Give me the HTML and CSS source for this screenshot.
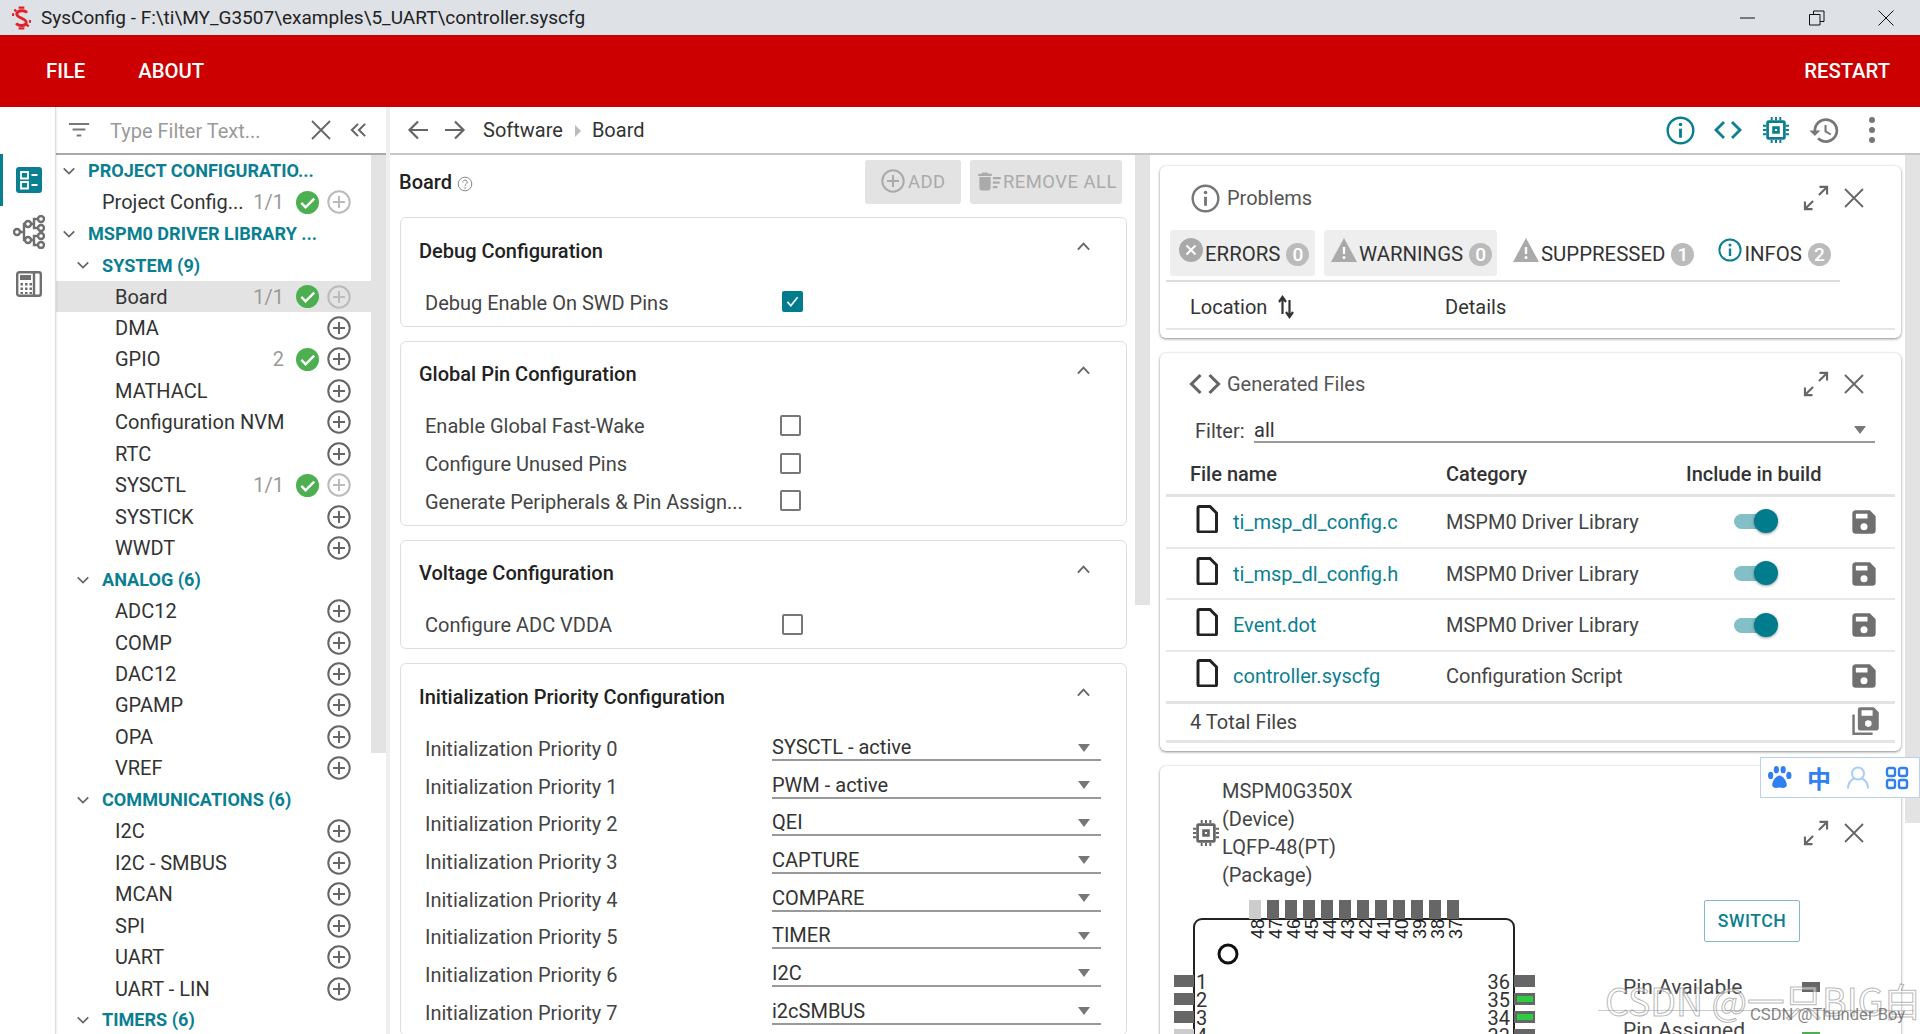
FILE: index.html
```html
<!DOCTYPE html>
<html lang="en">
<head>
<meta charset="utf-8">
<title>SysConfig</title>
<link rel="stylesheet" href="styles.css">
</head>
<body>
<svg class="sprite" width="0" height="0" aria-hidden="true">
  <symbol id="i-close" viewBox="0 0 24 24"><path d="M3 3l18 18M21 3L3 21" fill="none" stroke="currentColor" stroke-width="1.800"/></symbol>
  <symbol id="i-expand" viewBox="0 0 24 24"><path d="M14.500 9.500L21.500 2.500M15 2.500h6.500V9M9.500 14.500L2.500 21.500M2.500 15v6.500H9" fill="none" stroke="currentColor" stroke-width="1.800"/></symbol>
  <symbol id="i-plus" viewBox="0 0 24 24"><circle cx="12" cy="12" r="10.700" fill="none" stroke="currentColor" stroke-width="2"/><path d="M12 6v12M6 12h12" stroke="currentColor" stroke-width="2"/></symbol>
  <symbol id="i-check" viewBox="0 0 24 24"><circle cx="12" cy="12" r="12" fill="#4caf50"/><path d="M5.500 12.500l4.500 4.500 9-9" fill="none" stroke="#fff" stroke-width="2.600"/></symbol>
  <symbol id="i-down" viewBox="0 0 24 24"><path d="M3 7.500l9 9 9-9" fill="none" stroke="currentColor" stroke-width="3"/></symbol>
  <symbol id="i-up" viewBox="0 0 24 24"><path d="M3 17l9-9.500 9 9.500" fill="none" stroke="currentColor" stroke-width="3"/></symbol>
  <symbol id="i-info" viewBox="0 0 24 24"><circle cx="12" cy="12" r="10.600" fill="none" stroke="currentColor" stroke-width="2"/><path d="M12 10.500v7.500" stroke="currentColor" stroke-width="2.400"/><circle cx="12" cy="7" r="1.500" fill="currentColor"/></symbol>
  <symbol id="i-code" viewBox="0 0 24 24"><path d="M9 6l-6 6 6 6M15 6l6 6-6 6" fill="none" stroke="currentColor" stroke-width="2.100"/></symbol>
  <symbol id="i-chip" viewBox="0 0 24 24"><path d="M5 3h14a2 2 0 0 1 2 2v14a2 2 0 0 1-2 2H5a2 2 0 0 1-2-2V5a2 2 0 0 1 2-2zm.500 2.500v13h13v-13h-13z" fill="currentColor" fill-rule="evenodd"/><path d="M8.500 8.500h7v7h-7zM11 11v2h2v-2z" fill="currentColor" fill-rule="evenodd"/><path d="M8 0v3M12 0v3M16 0v3M8 21v3M12 21v3M16 21v3M0 8h3M0 12h3M0 16h3M21 8h3M21 12h3M21 16h3" stroke="currentColor" stroke-width="1.800"/></symbol>
  <symbol id="i-history" viewBox="0 0 24 24"><path d="M13 3a9 9 0 0 0-9 9H1l3.890 3.890.07.14L9 12H6c0-3.870 3.130-7 7-7s7 3.130 7 7-3.130 7-7 7c-1.930 0-3.680-.79-4.940-2.060l-1.420 1.420A8.954 8.954 0 0 0 13 21a9 9 0 0 0 0-18zm-1 5v5l4.280 2.540.72-1.210-3.500-2.080V8H12z" fill="currentColor"/></symbol>
  <symbol id="i-save" viewBox="0 0 24 24"><path d="M17 2H5a3 3 0 0 0-3 3v14a3 3 0 0 0 3 3h14a3 3 0 0 0 3-3V7l-5-5zm-5 17a3 3 0 1 1 0-6 3 3 0 0 1 0 6zm3-10H5V5h10v4z" fill="currentColor"/></symbol>
  <symbol id="i-saveall" viewBox="0 0 26 26"><path d="M10 1h11l4 4v13a2 2 0 0 1-2 2H10a2 2 0 0 1-2-2V3a2 2 0 0 1 2-2zm6.500 16a2.700 2.700 0 1 0 0-5.400 2.700 2.700 0 0 0 0 5.400zM11 3.500V8h9V3.500h-9z" fill="currentColor" fill-rule="evenodd"/><path d="M4.500 7v15.500H20" fill="none" stroke="currentColor" stroke-width="2"/></symbol>
  <symbol id="i-file" viewBox="0 0 22 28"><path d="M2 3a1.500 1.500 0 0 1 1.500-1.500H14L20.500 8v17.500A1.500 1.500 0 0 1 19 27H3.500A1.500 1.500 0 0 1 2 25.500z" fill="none" stroke="currentColor" stroke-width="3"/></symbol>
  <symbol id="i-sort" viewBox="0 0 16 24"><path d="M4.500 19V3M1 7l3.500-5L8 7M11.500 5v17M8 17l3.500 5 3.500-5" fill="none" stroke="currentColor" stroke-width="2.200"/></symbol>
  <symbol id="i-left" viewBox="0 0 24 24"><path d="M22 12H4M12 3.500L3.500 12l8.500 8.500" fill="none" stroke="currentColor" stroke-width="2.200"/></symbol>
  <symbol id="i-right" viewBox="0 0 24 24"><path d="M2 12h18M12 3.500l8.500 8.500-8.500 8.500" fill="none" stroke="currentColor" stroke-width="2.200"/></symbol>
  <symbol id="i-filter" viewBox="0 0 24 16"><path d="M1 1.500h22M5 7.500h14M9.500 14h5" stroke="currentColor" stroke-width="2.200"/></symbol>
  <symbol id="i-dbl" viewBox="0 0 18 16"><path d="M8.500 1.500L2 8l6.500 6.500M16 1.500L9.500 8l6.500 6.500" fill="none" stroke="currentColor" stroke-width="2.200"/></symbol>
  <symbol id="i-sweep" viewBox="0 0 24 24"><path d="M15 16h4v2h-4zm0-8h7v2h-7zm0 4h6v2h-6zM3 18c0 1.100.9 2 2 2h6c1.100 0 2-.9 2-2V8H3v10zM14 5h-3l-1-1H6L5 5H2v2h12z" fill="currentColor"/></symbol>
  <symbol id="i-help" viewBox="0 0 16 16"><circle cx="8" cy="8" r="6.800" fill="none" stroke="currentColor" stroke-width="1"/><path d="M5.800 6.300a2.200 2.200 0 1 1 3.400 1.800c-.8.500-1.200.9-1.200 1.900" fill="none" stroke="currentColor" stroke-width="1"/><circle cx="8" cy="12" r=".8" fill="currentColor"/></symbol>
  <symbol id="i-caret" viewBox="0 0 12 8"><path d="M0 0h12L6 8z" fill="currentColor"/></symbol>
</svg>

<header class="titlebar">
  <svg class="logo" viewBox="0 0 20 24"><g fill="none" stroke="#e2202a"><path d="M15.500 6.500C14 3.500 6 3.500 5 7.500c-.8 4.500 10.500 4.500 10 9.500-.5 3.800-8.500 3.800-10.500.5" stroke-width="3"/><path d="M7 1h6M7 23h6M1 7v3M19 14v3M2.500 3l2 2M15.500 19l2 2" stroke-width="2.400"/></g></svg>
  <span class="title-text">SysConfig - F:\ti\MY_G3507\examples\5_UART\controller.syscfg</span>
  <div class="winctl">
    <svg class="win-icon" viewBox="0 0 16 16"><path d="M0 8h15" stroke="#111" stroke-width="1"/></svg>
    <svg class="win-icon" viewBox="0 0 16 16"><path d="M.5 4.500h10.500v10.500H.5zM4.500 4.500v-3.500h10.500v10.500h-4" fill="none" stroke="#111" stroke-width="1"/></svg>
    <svg class="win-icon" viewBox="0 0 16 16"><path d="M.5.500l15 15M15.500.500l-15 15" stroke="#111" stroke-width="1"/></svg>
  </div>
</header>

<nav class="appbar">
  <a class="appbar-item">FILE</a>
  <a class="appbar-item">ABOUT</a>
  <a class="appbar-item appbar-end">RESTART</a>
</nav>

<main class="workspace">
  <aside class="rail">
    <div class="rail-btn rail-active">
      <svg class="rail-icon" viewBox="0 0 26 26"><rect width="26" height="26" rx="3" fill="#0b7f92"/><path d="M5 5h7v6.500H5zM5 15h7v6.500H5z" fill="none" stroke="#fff" stroke-width="1.800"/><path d="M15.500 8h6M15.500 18h6" stroke="#fff" stroke-width="2"/></svg>
    </div>
    <div class="rail-btn">
      <svg class="rail-icon rail-tree" viewBox="0 0 32 34" fill="none" stroke="#6f6f6f" stroke-width="2.400"><circle cx="4" cy="17" r="3"/><circle cx="15" cy="9" r="3"/><circle cx="15" cy="25" r="3"/><circle cx="28" cy="4" r="3"/><circle cx="28" cy="13" r="3"/><circle cx="28" cy="21" r="3"/><circle cx="28" cy="30" r="3"/><path d="M7 17h4V9h1M11 17v8h1M18 9h3V4h4M21 9v4h4M18 25h3v-4h4M21 25v5h4"/></svg>
    </div>
    <div class="rail-btn">
      <svg class="rail-icon" viewBox="0 0 26 26"><rect x="1.200" y="1.200" width="23.600" height="23.600" rx="2" fill="none" stroke="#6f6f6f" stroke-width="2.400"/><path d="M18 1v24" stroke="#6f6f6f" stroke-width="2.400"/><path d="M4 4h11v5H4z" fill="#6f6f6f"/><path d="M4.500 12h2.500v2.500H4.500zM9 12h2.500v2.500H9zM13.500 12H16v2.500h-2.500zM4.500 16.500h2.500V19H4.500zM9 16.500h2.500V19H9zM13.500 16.500H16V19h-2.500zM4.500 21h2.500v2H4.500zM9 21h2.500v2H9zM13.500 21H16v2h-2.500z" fill="#6f6f6f"/></svg>
    </div>
  </aside>

  <section class="tree-pane">
    <div class="filter-bar">
      <svg class="filter-icon"><use href="#i-filter"/></svg>
      <span class="filter-text">Type Filter Text...</span>
      <svg class="filter-x"><use href="#i-close"/></svg>
      <svg class="filter-dbl"><use href="#i-dbl"/></svg>
    </div>
    <div class="tree-body">
      <ul class="tree">
        <li class="row row-root"><svg class="chev"><use href="#i-down"/></svg><span class="group-name">PROJECT CONFIGURATIO...</span></li>
        <li class="row row-l1"><span class="name">Project Config...</span><span class="count">1/1</span><svg class="ok"><use href="#i-check"/></svg><svg class="plus plus-dim"><use href="#i-plus"/></svg></li>
        <li class="row row-root"><svg class="chev"><use href="#i-down"/></svg><span class="group-name">MSPM0 DRIVER LIBRARY ...</span></li>
        <li class="row row-group"><svg class="chev"><use href="#i-down"/></svg><span class="group-name">SYSTEM (9)</span></li>
        <li class="row row-item row-selected"><span class="name">Board</span><span class="count">1/1</span><svg class="ok"><use href="#i-check"/></svg><svg class="plus plus-dim"><use href="#i-plus"/></svg></li>
        <li class="row row-item"><span class="name">DMA</span><svg class="plus"><use href="#i-plus"/></svg></li>
        <li class="row row-item"><span class="name">GPIO</span><span class="count">2</span><svg class="ok"><use href="#i-check"/></svg><svg class="plus"><use href="#i-plus"/></svg></li>
        <li class="row row-item"><span class="name">MATHACL</span><svg class="plus"><use href="#i-plus"/></svg></li>
        <li class="row row-item"><span class="name">Configuration NVM</span><svg class="plus"><use href="#i-plus"/></svg></li>
        <li class="row row-item"><span class="name">RTC</span><svg class="plus"><use href="#i-plus"/></svg></li>
        <li class="row row-item"><span class="name">SYSCTL</span><span class="count">1/1</span><svg class="ok"><use href="#i-check"/></svg><svg class="plus plus-dim"><use href="#i-plus"/></svg></li>
        <li class="row row-item"><span class="name">SYSTICK</span><svg class="plus"><use href="#i-plus"/></svg></li>
        <li class="row row-item"><span class="name">WWDT</span><svg class="plus"><use href="#i-plus"/></svg></li>
        <li class="row row-group"><svg class="chev"><use href="#i-down"/></svg><span class="group-name">ANALOG (6)</span></li>
        <li class="row row-item"><span class="name">ADC12</span><svg class="plus"><use href="#i-plus"/></svg></li>
        <li class="row row-item"><span class="name">COMP</span><svg class="plus"><use href="#i-plus"/></svg></li>
        <li class="row row-item"><span class="name">DAC12</span><svg class="plus"><use href="#i-plus"/></svg></li>
        <li class="row row-item"><span class="name">GPAMP</span><svg class="plus"><use href="#i-plus"/></svg></li>
        <li class="row row-item"><span class="name">OPA</span><svg class="plus"><use href="#i-plus"/></svg></li>
        <li class="row row-item"><span class="name">VREF</span><svg class="plus"><use href="#i-plus"/></svg></li>
        <li class="row row-group"><svg class="chev"><use href="#i-down"/></svg><span class="group-name">COMMUNICATIONS (6)</span></li>
        <li class="row row-item"><span class="name">I2C</span><svg class="plus"><use href="#i-plus"/></svg></li>
        <li class="row row-item"><span class="name">I2C - SMBUS</span><svg class="plus"><use href="#i-plus"/></svg></li>
        <li class="row row-item"><span class="name">MCAN</span><svg class="plus"><use href="#i-plus"/></svg></li>
        <li class="row row-item"><span class="name">SPI</span><svg class="plus"><use href="#i-plus"/></svg></li>
        <li class="row row-item"><span class="name">UART</span><svg class="plus"><use href="#i-plus"/></svg></li>
        <li class="row row-item"><span class="name">UART - LIN</span><svg class="plus"><use href="#i-plus"/></svg></li>
        <li class="row row-group"><svg class="chev"><use href="#i-down"/></svg><span class="group-name">TIMERS (6)</span></li>
      </ul>
      <div class="scroll scroll-tree"></div>
    </div>
  </section>

  <div class="gutter"></div>

  <div class="content">
    <div class="crumbbar">
      <svg class="nav-arrow"><use href="#i-left"/></svg>
      <svg class="nav-arrow nav-arrow-last"><use href="#i-right"/></svg>
      <span class="crumb">Software</span>
      <span class="crumb-sep"></span>
      <span class="crumb">Board</span>
      <div class="tools">
        <svg class="tool tool-info"><use href="#i-info"/></svg>
        <svg class="tool tool-code"><use href="#i-code"/></svg>
        <svg class="tool tool-chip"><use href="#i-chip"/></svg>
        <svg class="tool tool-hist"><use href="#i-history"/></svg>
        <span class="tool-more"><i></i><i></i><i></i></span>
      </div>
    </div>

    <div class="panes">
      <section class="config-pane">
        <div class="config-scroll">
          <div class="config-head">
            <h1 class="config-title">Board</h1>
            <svg class="help"><use href="#i-help"/></svg>
            <span class="btn-disabled btn-add"><svg class="btn-plus"><use href="#i-plus"/></svg>ADD</span>
            <span class="btn-disabled btn-remove"><svg class="btn-sweep"><use href="#i-sweep"/></svg>REMOVE ALL</span>
          </div>

          <div class="card">
            <div class="card-head"><h2>Debug Configuration</h2><svg class="collapse"><use href="#i-up"/></svg></div>
            <div class="cfg-row"><span class="cfg-label">Debug Enable On SWD Pins</span><span class="cb cb-on cb-alt"><svg viewBox="0 0 20 20"><path d="M4 10.500l4 4.500 8-10" fill="none" stroke="#fff" stroke-width="2"/></svg></span></div>
          </div>

          <div class="card">
            <div class="card-head"><h2>Global Pin Configuration</h2><svg class="collapse"><use href="#i-up"/></svg></div>
            <div class="cfg-row"><span class="cfg-label">Enable Global Fast-Wake</span><span class="cb"></span></div>
            <div class="cfg-row"><span class="cfg-label">Configure Unused Pins</span><span class="cb"></span></div>
            <div class="cfg-row"><span class="cfg-label">Generate Peripherals &amp; Pin Assign...</span><span class="cb"></span></div>
          </div>

          <div class="card">
            <div class="card-head"><h2>Voltage Configuration</h2><svg class="collapse"><use href="#i-up"/></svg></div>
            <div class="cfg-row"><span class="cfg-label">Configure ADC VDDA</span><span class="cb cb-alt"></span></div>
          </div>

          <div class="card">
            <div class="card-head"><h2>Initialization Priority Configuration</h2><svg class="collapse"><use href="#i-up"/></svg></div>
            <div class="cfg-row"><span class="cfg-label">Initialization Priority 0</span><span class="select">SYSCTL - active<svg class="caret"><use href="#i-caret"/></svg></span></div>
            <div class="cfg-row"><span class="cfg-label">Initialization Priority 1</span><span class="select">PWM - active<svg class="caret"><use href="#i-caret"/></svg></span></div>
            <div class="cfg-row"><span class="cfg-label">Initialization Priority 2</span><span class="select">QEI<svg class="caret"><use href="#i-caret"/></svg></span></div>
            <div class="cfg-row"><span class="cfg-label">Initialization Priority 3</span><span class="select">CAPTURE<svg class="caret"><use href="#i-caret"/></svg></span></div>
            <div class="cfg-row"><span class="cfg-label">Initialization Priority 4</span><span class="select">COMPARE<svg class="caret"><use href="#i-caret"/></svg></span></div>
            <div class="cfg-row"><span class="cfg-label">Initialization Priority 5</span><span class="select">TIMER<svg class="caret"><use href="#i-caret"/></svg></span></div>
            <div class="cfg-row"><span class="cfg-label">Initialization Priority 6</span><span class="select">I2C<svg class="caret"><use href="#i-caret"/></svg></span></div>
            <div class="cfg-row"><span class="cfg-label">Initialization Priority 7</span><span class="select">i2cSMBUS<svg class="caret"><use href="#i-caret"/></svg></span></div>
          </div>
        </div>
        <div class="scroll scroll-config"></div>
      </section>

      <section class="side-pane">
        <div class="side-scroll">
          <div class="panel panel-problems">
            <div class="panel-head">
              <svg class="panel-icon"><use href="#i-info"/></svg>
              <span class="panel-title">Problems</span>
              <svg class="panel-expand"><use href="#i-expand"/></svg>
              <svg class="panel-close"><use href="#i-close"/></svg>
            </div>
            <div class="tabs">
              <span class="tab tab-errors tab-on"><svg class="tab-icon" viewBox="0 0 24 24"><circle cx="12" cy="12" r="12" fill="#aaa"/><path d="M7.500 7.500l9 9M16.500 7.500l-9 9" stroke="#fff" stroke-width="2"/></svg>ERRORS<b class="badge">0</b></span>
              <span class="tab tab-warn tab-on"><svg class="tab-icon" viewBox="0 0 26 24"><path d="M13 0l13 24H0z" fill="#aaa"/><path d="M13 9v7" stroke="#fff" stroke-width="2.400"/><circle cx="13" cy="19.500" r="1.500" fill="#fff"/></svg>WARNINGS<b class="badge">0</b></span>
              <span class="tab tab-supp"><svg class="tab-icon" viewBox="0 0 26 24"><path d="M13 0l13 24H0z" fill="#aaa"/><path d="M13 9v7" stroke="#fff" stroke-width="2.400"/><circle cx="13" cy="19.500" r="1.500" fill="#fff"/></svg>SUPPRESSED<b class="badge">1</b></span>
              <span class="tab tab-infos"><svg class="tab-icon tab-icon-info"><use href="#i-info"/></svg>INFOS<b class="badge">2</b></span>
            </div>
            <div class="loc-head">
              <span class="col-loc">Location</span><svg class="sort"><use href="#i-sort"/></svg>
              <span class="col-details">Details</span>
            </div>
          </div>

          <div class="panel panel-files">
            <div class="panel-head panel-head-files">
              <svg class="panel-icon panel-icon-code"><use href="#i-code"/></svg>
              <span class="panel-title panel-title-files">Generated Files</span>
              <svg class="panel-expand"><use href="#i-expand"/></svg>
              <svg class="panel-close"><use href="#i-close"/></svg>
            </div>
            <div class="file-filter"><span class="ff-label">Filter:</span><span class="ff-select">all<svg class="caret"><use href="#i-caret"/></svg></span></div>
            <div class="ftable-head"><span class="f-name">File name</span><span class="f-cat">Category</span><span class="f-inc">Include in build</span></div>
            <div class="frow">
              <svg class="f-file"><use href="#i-file"/></svg><a class="f-link">ti_msp_dl_config.c</a><span class="f-cat">MSPM0 Driver Library</span>
              <span class="toggle"><i></i></span><svg class="f-save"><use href="#i-save"/></svg>
            </div>
            <div class="frow">
              <svg class="f-file"><use href="#i-file"/></svg><a class="f-link">ti_msp_dl_config.h</a><span class="f-cat">MSPM0 Driver Library</span>
              <span class="toggle"><i></i></span><svg class="f-save"><use href="#i-save"/></svg>
            </div>
            <div class="frow">
              <svg class="f-file"><use href="#i-file"/></svg><a class="f-link">Event.dot</a><span class="f-cat">MSPM0 Driver Library</span>
              <span class="toggle"><i></i></span><svg class="f-save"><use href="#i-save"/></svg>
            </div>
            <div class="frow frow-last">
              <svg class="f-file"><use href="#i-file"/></svg><a class="f-link">controller.syscfg</a><span class="f-cat">Configuration Script</span>
              <svg class="f-save f-save-solo"><use href="#i-save"/></svg>
            </div>
            <div class="ffoot"><span>4 Total Files</span><svg class="f-saveall"><use href="#i-saveall"/></svg></div>
          </div>

          <div class="panel panel-device">
            <div class="device-head">
              <svg class="device-chip"><use href="#i-chip"/></svg>
              <div class="device-lines"><div>MSPM0G350X</div><div>(Device)</div><div>LQFP-48(PT)</div><div>(Package)</div></div>
              <svg class="panel-expand"><use href="#i-expand"/></svg>
              <svg class="panel-close"><use href="#i-close"/></svg>
            </div>
            <div class="device-body">
              <svg class="chip-svg" viewBox="0 0 380 140" width="380" height="140">
                <rect class="pkg" x="24" y="24" width="320" height="200" rx="8"/>
                <circle class="pin1" cx="58" cy="59" r="9"/>
                <g class="pin-off"><rect x="79" y="5" width="12" height="19"/><rect x="4" y="134" width="20" height="12"/></g>
                <g class="pin-on">
                  <rect x="97" y="5" width="12" height="19"/><rect x="115" y="5" width="12" height="19"/><rect x="133" y="5" width="12" height="19"/><rect x="151" y="5" width="12" height="19"/><rect x="169" y="5" width="12" height="19"/><rect x="187" y="5" width="12" height="19"/><rect x="205" y="5" width="12" height="19"/><rect x="223" y="5" width="12" height="19"/><rect x="241" y="5" width="12" height="19"/><rect x="259" y="5" width="12" height="19"/><rect x="277" y="5" width="12" height="19"/>
                  <rect x="4" y="80" width="20" height="12"/><rect x="4" y="98" width="20" height="12"/><rect x="4" y="116" width="20" height="12"/>
                  <rect x="344" y="80" width="21" height="12"/><rect x="344" y="98" width="21" height="12"/><rect x="344" y="116" width="21" height="12"/><rect x="344" y="134" width="21" height="12"/>
                </g>
                <rect class="pin-green" x="347" y="101" width="16" height="6"/><rect class="pin-green" x="347" y="119" width="16" height="6"/>
                <g class="pin-v">
                  <text transform="translate(94 44) rotate(-90)">48</text><text transform="translate(112 44) rotate(-90)">47</text><text transform="translate(130 44) rotate(-90)">46</text><text transform="translate(148 44) rotate(-90)">45</text><text transform="translate(166 44) rotate(-90)">44</text><text transform="translate(184 44) rotate(-90)">43</text><text transform="translate(202 44) rotate(-90)">42</text><text transform="translate(220 44) rotate(-90)">41</text><text transform="translate(238 44) rotate(-90)">40</text><text transform="translate(256 44) rotate(-90)">39</text><text transform="translate(274 44) rotate(-90)">38</text><text transform="translate(292 44) rotate(-90)">37</text>
                </g>
                <g class="pin-h">
                  <text x="26" y="94">1</text><text x="26" y="112">2</text><text x="26" y="130">3</text><text x="26" y="148">4</text>
                </g>
                <g class="pin-h pin-h-r">
                  <text x="340" y="94">36</text><text x="340" y="112">35</text><text x="340" y="130">34</text><text x="340" y="148">33</text>
                </g>
              </svg>
              <div class="device-side">
                <span class="switch">SWITCH</span>
                <div class="legend"><span>Pin Available</span><i class="sw sw-gray"></i></div>
                <div class="legend legend-2"><span>Pin Assigned</span><i class="sw sw-green"></i></div>
              </div>
            </div>
          </div>
        </div>
        <div class="scroll scroll-side"></div>
      </section>
    </div>
  </div>
</main>

<div class="ime">
  <svg class="ime-paw" viewBox="0 0 24 24"><ellipse cx="3.500" cy="10" rx="2.500" ry="3.500" fill="#2f80f0"/><ellipse cx="9" cy="4.500" rx="2.500" ry="3.500" fill="#2f80f0"/><ellipse cx="15.500" cy="4.500" rx="2.500" ry="3.500" fill="#2f80f0"/><ellipse cx="21" cy="10" rx="2.500" ry="3.500" fill="#2f80f0"/><path d="M12 10c3 0 7 5 7 9 0 3-3 3.500-7 2.500-4 1-7 .5-7-2.500 0-4 4-9 7-9z" fill="#2f80f0"/></svg>
  <span class="ime-zh">中</span>
  <svg class="ime-user" viewBox="0 0 24 24"><circle cx="12" cy="8" r="6" fill="none" stroke="#a9cdf7" stroke-width="2"/><path d="M2 23c0-6 4-9 6-10M22 23c0-6-4-9-6-10" fill="none" stroke="#a9cdf7" stroke-width="2"/></svg>
  <svg class="ime-grid" viewBox="0 0 24 24" fill="none" stroke="#2f80f0" stroke-width="2.400"><rect x="2" y="2" width="8" height="8" rx="2"/><rect x="14" y="2" width="8" height="8" rx="2"/><rect x="2" y="14" width="8" height="8" rx="2"/><rect x="14" y="14" width="8" height="8" rx="2"/></svg>
</div>
<div class="wm-big">CSDN @一只BIG白</div>
<div class="wm-small">CSDN @Thunder Boy</div>
</body>
</html>
```

FILE: styles.css
```css
* { box-sizing: border-box; }
html, body { margin: 0; height: 100%; }
body {
  width: 1920px; height: 1034px; overflow: hidden; position: relative;
  display: flex; flex-direction: column;
  font-family: Roboto, "Noto Sans", sans-serif; font-size: 20px; color: #333; background: #fff;
}
.sprite { position: absolute; }
h1, h2, ul { margin: 0; padding: 0; list-style: none; }

/* title bar */
.titlebar { height: 35px; flex: none; background: #dee1e6; display: flex; align-items: center; padding-left: 12px; }
.logo { width: 19px; height: 24px; flex: none; }
.title-text { margin-left: 10px; font-size: 19px; color: #222; }
.winctl { margin-left: auto; display: flex; gap: 53px; padding-right: 26px; }
.win-icon { width: 16px; height: 16px; display: block; }

/* app bar */
.appbar { height: 72px; flex: none; background: #cc0000; display: flex; align-items: center; padding: 0 30px 0 46px; color: #fff; font-weight: 500; font-size: 20.3px; gap: 53px; }
.appbar-end { margin-left: auto; }

/* workspace */
.workspace { flex: 1; display: flex; min-height: 0; }
.rail { width: 56px; flex: none; border-right: 1px solid #ddd; padding-top: 47px; box-shadow: 1px 0 2px rgba(0,0,0,.08); z-index: 1; }
.rail-btn { height: 52px; display: flex; align-items: center; justify-content: center; padding-left: 2px; }
.rail-active { border-left: 3px solid #0b7f92; padding-left: 0; }
.rail-icon { width: 26px; height: 26px; display: block; }
.rail-tree { width: 32px; height: 34px; }

.tree-pane { width: 330px; flex: none; display: flex; flex-direction: column; }
.filter-bar { height: 48px; flex: none; display: flex; align-items: center; border-bottom: 2px solid #aaa; padding-left: 12px; color: #777; }
.filter-icon { width: 22px; height: 16px; flex: none; color: #777; }
.filter-text { margin-left: 20px; width: 192px; color: #9a9a9a; padding-top: 2px; white-space: nowrap; }
.filter-x { width: 24px; height: 24px; margin-left: 7px; color: #666; flex: none; }
.filter-dbl { width: 17px; height: 16px; margin-left: 17px; color: #666; flex: none; }
.tree-body { flex: 1; display: flex; min-height: 0; overflow: hidden; }
.tree { flex: 1; min-width: 0; }
.row { height: 31.46px; display: flex; align-items: center; color: #333; }
.row-root { padding-left: 6px; }
.row-group { padding-left: 20px; }
.row-l1 { padding-left: 46px; padding-right: 20px; }
.row-item { padding-left: 59px; padding-right: 20px; }
.row-selected { background: #e3e3e3; }
.chev { width: 14px; height: 14px; color: #666; flex: none; margin-right: 12px; }
.group-name { color: #0b7f92; font-weight: 700; font-size: 18.1px; white-space: nowrap; }
.name { white-space: nowrap; }
.count { margin-left: auto; color: #999; width: 36px; text-align: right; margin-right: 12px; }
.ok { width: 23px; height: 23px; flex: none; margin-right: 8px; }
.plus { width: 24px; height: 24px; flex: none; color: #666; margin-left: auto; }
.ok + .plus { margin-left: 0; }
.plus-dim { color: #bbb; }
.gutter { width: 4px; flex: none; background: #efefef; }

.scroll { width: 15px; flex: none; background: #e3e3e3; }
.scroll-tree { height: 598px; }
.scroll-config { height: 450px; }
.scroll-side { height: 668px; }

/* content */
.content { flex: 1; min-width: 0; display: flex; flex-direction: column; }
.crumbbar { height: 48px; flex: none; display: flex; align-items: center; border-bottom: 2px solid #c6c6c6; padding-left: 16px; padding-right: 45px; }
.nav-arrow { width: 24px; height: 24px; color: #666; margin-right: 13px; flex: none; }
.nav-arrow-last { margin-right: 16px; }
.crumb { color: #333; }
.crumb-sep { width: 0; height: 0; border-left: 6px solid #bbb; border-top: 6px solid transparent; border-bottom: 6px solid transparent; margin: 2px 11px 0 12px; }
.tools { margin-left: auto; display: flex; align-items: center; }
.tool { width: 29px; height: 29px; flex: none; color: #0b7f92; }
.tool-code { width: 32px; height: 32px; margin-left: 17.5px; }
.tool-chip { width: 26px; height: 26px; margin-left: 19px; }
.tool-hist { width: 33px; height: 33px; margin-left: 19px; color: #777; }
.tool-more { display: flex; flex-direction: column; gap: 4px; margin-left: 28px; }
.tool-more i { width: 6px; height: 6px; border-radius: 50%; background: #777; display: block; }

.panes { flex: 1; display: flex; min-height: 0; }
.config-pane { width: 760px; flex: none; display: flex; overflow: hidden; }
.config-scroll { flex: 1; min-width: 0; padding: 5px 8px 0 10px; }
.config-head { display: flex; align-items: center; height: 44px; margin-bottom: 13px; padding-right: 5px; }
.config-title { font-size: 20px; font-weight: 500; color: #222; margin-left: -1px; }
.help { width: 16px; height: 16px; margin: 4px 0 0 5px; color: #888; flex: none; }
.btn-disabled { display: flex; align-items: center; height: 44px; background: #e3e3e3; border-radius: 3px; color: #aaa; font-size: 18.4px; letter-spacing: .5px; white-space: nowrap; padding-bottom: 2px; }
.btn-add { margin-left: auto; width: 96px; padding-left: 16px; }
.btn-remove { margin-left: 9px; width: 152px; padding-left: 6px; }
.btn-plus { width: 24px; height: 24px; color: #aaa; margin-right: 3px; flex: none; }
.btn-sweep { width: 27px; height: 27px; color: #aaa; flex: none; }

.card { border: 1px solid #dedede; border-radius: 6px; padding: 0 0 5px 0; margin-bottom: 14px; }
.card-head { height: 65px; display: flex; align-items: center; justify-content: space-between; padding: 0 35px 0 18px; }
.card-head h2 { font-size: 20px; font-weight: 500; color: #222; }
.collapse { width: 15px; height: 15px; color: #666; margin-top: -8px; flex: none; }
.cfg-row { height: 37.65px; display: flex; align-items: center; padding-left: 24px; }
.cfg-label { width: 347px; flex: none; color: #444; white-space: nowrap; padding-top: 2px; }
.cb { width: 21px; height: 21px; border: 2px solid #777; border-radius: 2px; flex: none; margin-left: 8px; display: block; }
.cb-alt { margin-left: 10px; }
.cb-on { background: #007c8c; border-color: #007c8c; }
.cb-on svg { width: 17px; height: 17px; display: block; }
.select { width: 329px; flex: none; border-bottom: 2px solid #999; height: 25px; margin-top: 1px; line-height: 23px; display: flex; align-items: center; justify-content: space-between; padding-right: 11px; color: #333; white-space: nowrap; }
.caret { width: 12px; height: 8px; color: #777; flex: none; }

/* side panels */
.side-pane { flex: 1; min-width: 0; display: flex; overflow: hidden; }
.side-scroll { flex: 1; min-width: 0; padding: 11px 4px 0 10px; }
.panel { background: #fff; border-radius: 6px; box-shadow: 0 1px 3px rgba(0,0,0,.45), 0 0 2px rgba(0,0,0,.06); margin-bottom: 15px; }
.panel-problems { height: 172px; padding: 0 6px; }
.panel-files { height: 398px; padding: 0 6px; }
.panel-device { height: 360px; }
.panel-head { height: 64px; display: flex; align-items: center; padding: 0 29px 0 25px; }
.panel-head-files { padding-bottom: 2px; }
.panel-icon { width: 29px; height: 29px; color: #777; flex: none; }
.panel-icon-code { color: #666; width: 36px; height: 36px; margin-left: -4px; }
.panel-title { margin-left: 7px; color: #555; white-space: nowrap; }
.panel-title-files { margin-left: 4px; }
.panel-expand { width: 28px; height: 28px; color: #666; margin-left: auto; flex: none; }
.panel-close { width: 24px; height: 24px; color: #666; margin-left: 12px; flex: none; }

.tabs { display: flex; align-items: center; height: 52px; border-bottom: 2px solid #ddd; width: 674px; padding: 1px 0 5px 4px; }
.tab { height: 46px; display: flex; align-items: center; white-space: nowrap; color: #333; font-size: 20.4px; padding-top: 2px; }
.tab-on { background: #eee; border-radius: 3px; }
.tab-errors { width: 145px; padding-left: 9px; }
.tab-warn { width: 173px; margin-left: 9px; padding-left: 7px; }
.tab-supp { margin-left: 16px; }
.tab-infos { margin-left: 24px; }
.tab-icon { width: 24px; height: 24px; margin-top: -9px; margin-right: 2px; flex: none; }
.tab-icon-info { color: #0b7f92; }
.tab-warn .tab-icon, .tab-supp .tab-icon { width: 26px; }
.badge { width: 23px; height: 23px; border-radius: 50%; background: #bbb; color: #fff; font-size: 19px; font-weight: 500; display: flex; align-items: center; justify-content: center; margin-left: 6px; flex: none; }

.loc-head { height: 48px; display: flex; align-items: center; padding: 4px 0 0 24px; border-bottom: 2px solid #e5e5e5; color: #333; }
.col-loc { width: 88px; font-weight: 400; }
.sort { width: 16px; height: 24px; color: #333; flex: none; }
.col-details { margin-left: 151px; }

.file-filter { display: flex; align-items: flex-end; height: 26px; padding-left: 29px; }
.ff-label { width: 59px; flex: none; color: #444; }
.ff-select { width: 621px; flex: none; border-bottom: 2px solid #999; height: 26px; line-height: 24px; padding-top: 1px; display: flex; align-items: center; justify-content: space-between; padding-right: 9px; color: #333; }
.ftable-head { height: 54px; display: flex; align-items: center; border-bottom: 3px solid #e3e3e3; padding: 10px 0 0 24px; color: #333; font-weight: 500; font-size: 20px; }
.f-name { width: 256px; flex: none; }
.f-cat { width: 240px; flex: none; white-space: nowrap; color: #444; }
.ftable-head .f-cat { color: #333; }
.f-inc { white-space: nowrap; }
.frow { height: 51.7px; display: flex; align-items: center; border-bottom: 2px solid #e8e8e8; padding-left: 30px; }
.frow-last { border-bottom-width: 3px; border-color: #e3e3e3; }
.f-file { width: 22px; height: 28px; color: #222; flex: none; margin-top: -6px; }
.f-link { width: 213px; flex: none; color: #0b7f92; margin-left: 15px; white-space: nowrap; }
.toggle { position: relative; display: block; width: 42px; height: 15px; border-radius: 8px; background: #83bfc6; margin-left: 48px; flex: none; }
.toggle i { position: absolute; right: -2px; top: -5px; width: 24px; height: 24px; border-radius: 50%; background: #007c8c; box-shadow: 0 1px 3px rgba(0,0,0,.4); }
.f-save { width: 28px; height: 28px; color: #6f6f6f; margin-left: 74px; flex: none; }
.f-save-solo { margin-left: 164px; }
.ffoot { height: 39px; display: flex; align-items: center; justify-content: space-between; padding: 1px 15px 0 24px; border-bottom: 3px solid #e5e5e5; color: #444; }
.f-saveall { width: 32px; height: 32px; color: #777; flex: none; }

.device-head { display: flex; align-items: center; padding: 11px 35px 0 33px; }
.device-chip { width: 26px; height: 26px; color: #666; flex: none; }
.device-lines { margin-left: 3px; line-height: 28px; color: #444; white-space: nowrap; }
.device-body { display: flex; margin-top: 6px; margin-left: 10px; }
.chip-svg { display: block; flex: none; overflow: hidden; }
.pkg { fill: #fff; stroke: #222; stroke-width: 2; }
.pin1 { fill: none; stroke: #111; stroke-width: 3; }
.pin-on { fill: #666; }
.pin-off { fill: #ccc; }
.pin-green { fill: #2ecc40; }
.pin-v text { font-family: "Liberation Sans", sans-serif; font-size: 18px; fill: #222; }
.pin-h text { font-size: 20px; fill: #333; }
.pin-h-r text { text-anchor: end; }
.device-side { width: 300px; padding-left: 154px; }
.switch { display: flex; width: 96px; height: 42px; margin-top: 5px; align-items: center; justify-content: center; border: 1px solid #7fbcc5; border-radius: 2px; color: #0b7f92; font-weight: 500; font-size: 17.6px; letter-spacing: .5px; }
.legend { display: flex; align-items: center; margin: 31px 0 0 -81px; width: 197px; font-size: 21px; color: #444; justify-content: space-between; height: 28px; white-space: nowrap; }
.legend-2 { margin-top: 15px; }
.sw { width: 18px; height: 10px; display: block; flex: none; }
.sw-gray { background: #666; }
.sw-green { background: #4caf50; margin-top: 14px; }

/* overlays */
.ime { position: absolute; left: 1760px; top: 757px; width: 160px; height: 41px; background: #fff; border: 1px solid #bcd0ee; display: flex; align-items: center; gap: 17px; padding-left: 6px; }
.ime-paw { width: 25px; height: 25px; flex: none; }
.ime-zh { color: #2f80f0; font-size: 24px; font-weight: 700; font-family: "Noto Sans CJK SC", sans-serif; line-height: 1; width: 24px; margin-left: -2px; }
.ime-user { width: 24px; height: 25px; flex: none; margin-left: -2px; }
.ime-grid { width: 24px; height: 24px; flex: none; margin-left: -2px; }
.wm-big { position: absolute; left: 1605px; top: 975px; width: 302px; font-size: 37.5px; white-space: nowrap; color: rgba(255,255,255,.5); -webkit-text-stroke: 1px rgba(120,120,120,.55); font-family: "Noto Sans CJK SC", sans-serif; line-height: 50px; }
.wm-big::after { content: ""; position: absolute; left: -7px; right: -7px; top: 35px; border-top: 1px solid rgba(150,150,150,.5); }
.wm-small { position: absolute; left: 1750px; top: 1004px; font-size: 16.6px; white-space: nowrap; color: rgba(90,90,90,.75); line-height: 22px; }
```
